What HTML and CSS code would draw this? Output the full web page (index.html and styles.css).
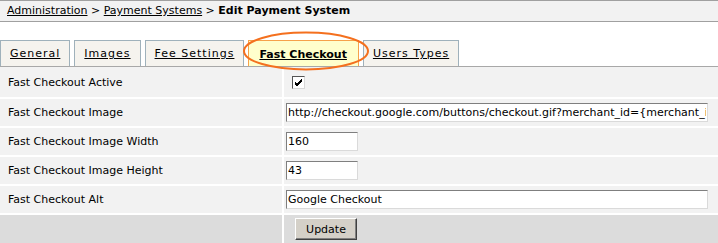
FILE: index.html
```html
<!DOCTYPE html>
<html lang="en">
<head>
    <meta charset="UTF-8">
    <title>Edit Payment System</title>
    <link rel="stylesheet" href="styles.css">
</head>
<body>
<div class="crumbs">
    <a href="#">Administration</a> &gt; <a href="#">Payment Systems</a> &gt; <b>Edit Payment System</b>
</div>

<div class="tabs">
    <a class="tab" href="#">General</a>
    <a class="tab" href="#">Images</a>
    <a class="tab" href="#">Fee Settings</a>
    <a class="tab active" href="#">Fast Checkout
        <svg class="mark" width="128" height="40" viewBox="0 0 128 40"><ellipse cx="64" cy="20" rx="62" ry="18.5" fill="none" stroke="#f4701e" stroke-width="2"/></svg>
    </a>
    <a class="tab" href="#">Users Types</a>
</div>

<form>
<table class="form-table">
    <tr class="first">
        <td class="label">Fast Checkout Active</td>
        <td><span class="check"><svg width="9" height="9" viewBox="0 0 9 9"><path d="M1 4 L3 6 L8 1 M1 5 L3 7 L8 2 M1 6 L3 8 L8 3" fill="none" stroke="#000" stroke-width="1"/></svg></span></td>
    </tr>
    <tr>
        <td class="label">Fast Checkout Image</td>
        <td><input class="wide" type="text" value="http://checkout.google.com/buttons/checkout.gif?merchant_id={merchant_id}&amp;w=160&amp;h=43"></td>
    </tr>
    <tr>
        <td class="label">Fast Checkout Image Width</td>
        <td><input class="short" type="text" value="160"></td>
    </tr>
    <tr>
        <td class="label">Fast Checkout Image Height</td>
        <td><input class="short" type="text" value="43"></td>
    </tr>
    <tr>
        <td class="label">Fast Checkout Alt</td>
        <td><input class="wide" type="text" value="Google Checkout"></td>
    </tr>
    <tr class="buttons">
        <td class="label"></td>
        <td><button type="button">Update</button></td>
    </tr>
</table>
</form>
</body>
</html>
```

FILE: styles.css
```css
body {
    margin: 0;
    font-family: "DejaVu Sans", Verdana, sans-serif;
    font-size: 11px;
    color: #000;
    background: #fff;
}
a {
    color: #000;
}
.crumbs {
    background: #f2f2f2;
    border-top: 1px solid #a0a0a0;
    border-bottom: 1px solid #a0a0a0;
    height: 20px;
    line-height: 20px;
    padding-left: 7px;
}
.tabs {
    display: flex;
    align-items: flex-end;
    gap: 4px;
    margin-top: 18px;
    border-bottom: 1px solid #a8a8a8;
}
.tab {
    display: block;
    height: 25px;
    line-height: 25px;
    padding: 0 9px;
    font-size: 12px;
    font-size: 11px;
    letter-spacing: 1px;
    background: #f5f3ee;
    border: 1px solid #9fb1bb;
    border-bottom: none;
}
.tab.active {
    position: relative;
    background: #ffffcc;
    border-color: #f6a24a;
    font-weight: bold;
    letter-spacing: 0;
    padding: 3px 11px 0 10px;
    height: 22px;
    line-height: 22px;
}
.tab .mark {
    position: absolute;
    left: -7px;
    top: -10px;
}
.form-table {
    width: 100%;
    border-collapse: separate;
    border-spacing: 0;
}
.form-table td {
    background: #f2f2f2;
    border-top: 2px solid #fff;
    height: 27px;
    padding: 0 2px;
}
.form-table .first td {
    border-top: none;
    height: 30px;
}
.form-table td.label {
    width: 272px;
    padding-left: 8px;
    border-right: 2px solid #fff;
}
.form-table .buttons td {
    background: #dcdcdc;
    height: 31px;
    vertical-align: top;
}
.check {
    display: inline-block;
    vertical-align: middle;
    margin-left: 6px;
    width: 11px;
    height: 11px;
    background: #fff;
    border: 1px solid;
    border-color: #555 #d8d8d8 #d8d8d8 #555;
    position: relative;
}
.check svg {
    position: absolute;
    left: 1px;
    top: 1px;
}
input {
    box-sizing: border-box;
    height: 19px;
    padding: 0 1px;
    font-family: inherit;
    font-size: 11px;
    border: 1px solid;
    border-color: #7f7f7f #dadada #dadada #7f7f7f;
    vertical-align: middle;
}
input.wide {
    width: 422px;
}
input.short {
    width: 72px;
}
button {
    margin: 3px 0 0 9px;
    width: 62px;
    height: 22px;
    padding: 0;
    font-family: inherit;
    font-size: 11px;
    color: #000;
    background: #d4d0c8;
    border: 1px solid;
    border-color: #fff #404040 #404040 #fff;
    box-shadow: inset -1px -1px 0 #808080;
}
```
